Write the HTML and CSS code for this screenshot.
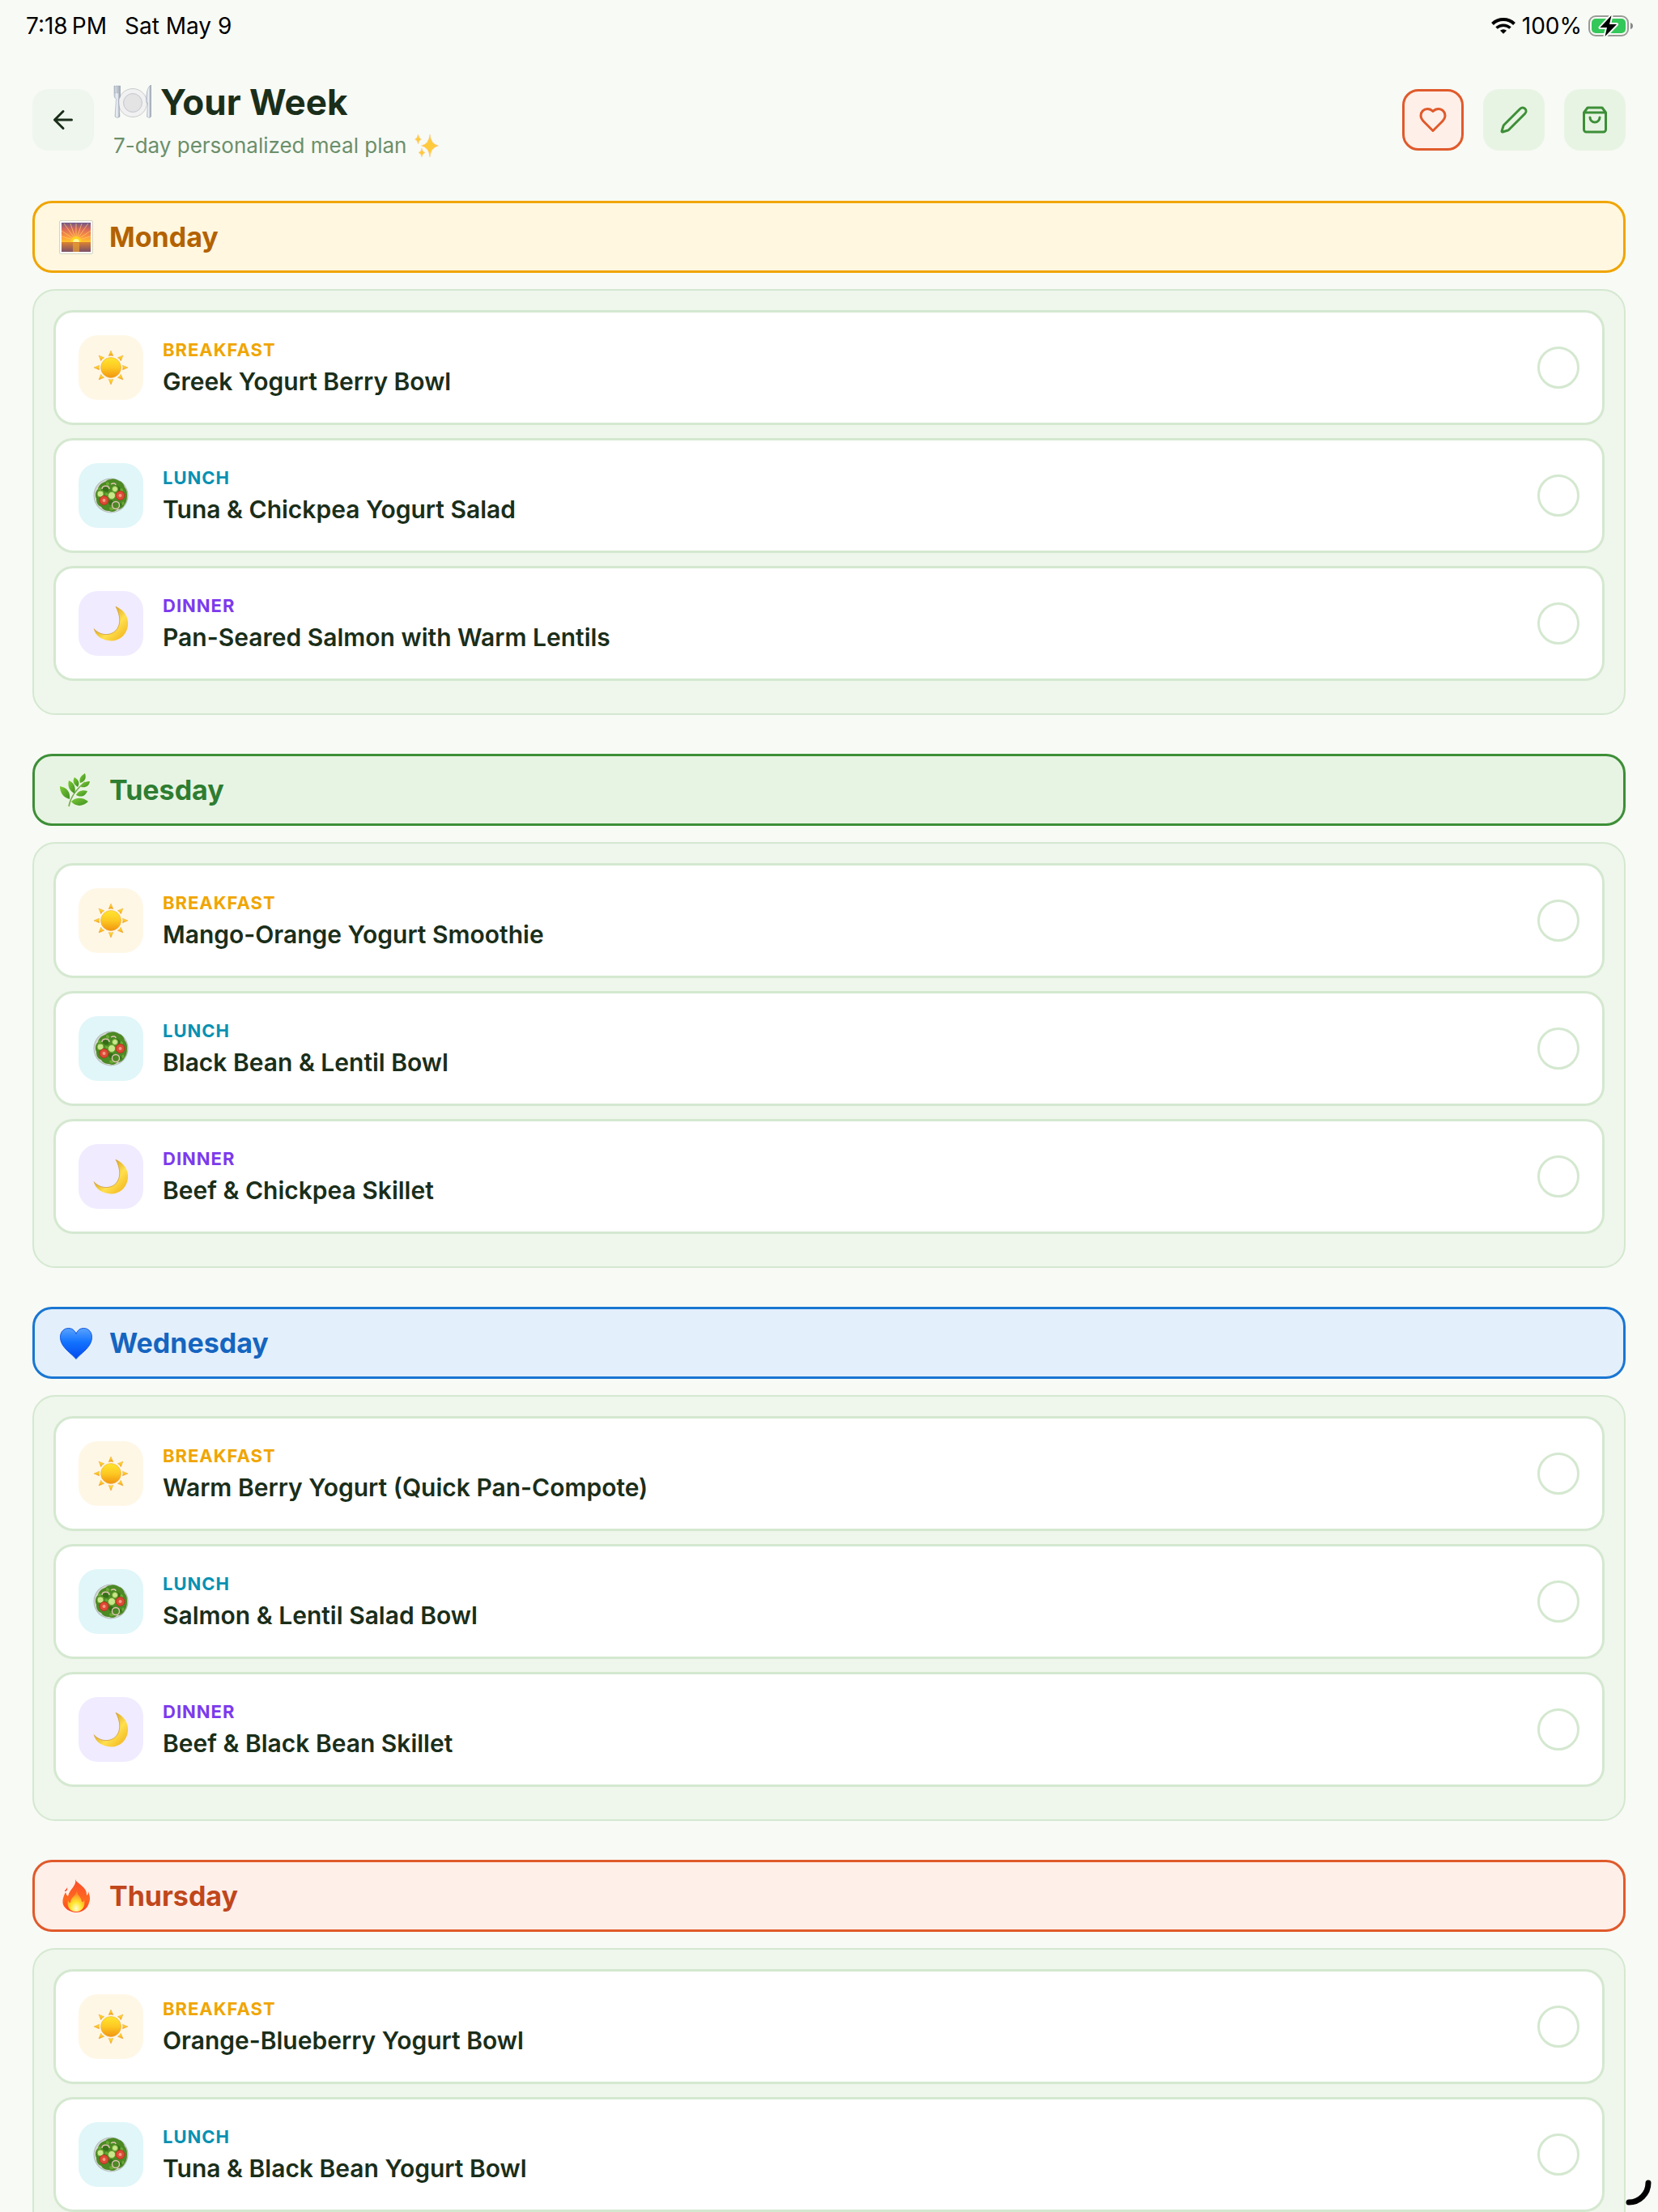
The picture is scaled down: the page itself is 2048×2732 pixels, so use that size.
FILE: index.html
```html
<!DOCTYPE html>
<html lang="en">
<head>
    <meta charset="UTF-8">
    <meta name="viewport" content="width=device-width, initial-scale=1.0">
    <title>Your Week</title>
    <link rel="stylesheet" href="styles.css">
</head>
<body>
    <!-- shared icons -->
    <svg class="sprite" aria-hidden="true">
        <defs>
            <linearGradient id="sunFill" x1="0" y1="0" x2="0" y2="1">
                <stop offset="0" stop-color="#ffe52e"/>
                <stop offset="0.5" stop-color="#fdc823"/>
                <stop offset="1" stop-color="#f1950f"/>
            </linearGradient>
            <linearGradient id="moonFill" x1="0" y1="0" x2="1" y2="1">
                <stop offset="0.3" stop-color="#d9a21b"/>
                <stop offset="0.6" stop-color="#ffe04f"/>
                <stop offset="0.9" stop-color="#f3b922"/>
            </linearGradient>
            <linearGradient id="skyFill" x1="0" y1="0" x2="0" y2="1">
                <stop offset="0" stop-color="#6d5a8c"/>
                <stop offset="0.22" stop-color="#d9695a"/>
                <stop offset="0.5" stop-color="#ff9a3c"/>
                <stop offset="0.66" stop-color="#ffc42c"/>
                <stop offset="0.68" stop-color="#d98032"/>
                <stop offset="1" stop-color="#7b5068"/>
            </linearGradient>
            <linearGradient id="leafFill" x1="0" y1="0" x2="1" y2="1">
                <stop offset="0" stop-color="#7ccb36"/>
                <stop offset="1" stop-color="#3f8f22"/>
            </linearGradient>
            <linearGradient id="heartFill" x1="0" y1="0" x2="0" y2="1">
                <stop offset="0" stop-color="#5aa2ff"/>
                <stop offset="0.45" stop-color="#1273ff"/>
                <stop offset="1" stop-color="#0448ee"/>
            </linearGradient>
            <linearGradient id="fireFill" x1="0" y1="0" x2="0" y2="1">
                <stop offset="0" stop-color="#fb4a2c"/>
                <stop offset="0.6" stop-color="#ff6a1f"/>
                <stop offset="1" stop-color="#ff3d22"/>
            </linearGradient>
            <radialGradient id="fireCore" cx="0.5" cy="0.85" r="0.7">
                <stop offset="0" stop-color="#fffbd0"/>
                <stop offset="0.45" stop-color="#ffe62e"/>
                <stop offset="1" stop-color="#ff8a2a"/>
            </radialGradient>
            <linearGradient id="steel" x1="0" y1="0" x2="1" y2="0">
                <stop offset="0" stop-color="#c3cdd9"/>
                <stop offset="0.5" stop-color="#eef2f7"/>
                <stop offset="1" stop-color="#8b95a3"/>
            </linearGradient>
        </defs>
        <symbol id="sun" viewBox="0 0 44 44">
            <g fill="url(#sunFill)" stroke="#e8a33a" stroke-width="0.5">
                <path d="M22 1l2.8 6.6q-2.8-1-5.6 0z"/>
                <path d="M22 43l2.8-6.6q-2.8 1-5.6 0z"/>
                <path d="M1 22l6.6-2.8q-1 2.8 0 5.6z"/>
                <path d="M43 22l-6.6-2.8q1 2.8 0 5.6z"/>
                <path d="M7 7l6.7 2.7q-2.7 1.2-4 4z"/>
                <path d="M37 7l-6.7 2.7q2.7 1.2 4 4z"/>
                <path d="M7 37l6.7-2.7q-2.7-1.2-4-4z"/>
                <path d="M37 37l-6.7-2.7q2.7-1.2 4-4z"/>
                <circle cx="22" cy="22" r="12.5"/>
            </g>
        </symbol>
        <symbol id="salad" viewBox="0 0 44 44">
            <circle cx="22" cy="22" r="21.5" fill="#b4bab9"/>
            <circle cx="22" cy="22" r="20.5" fill="#d3d8d5"/>
            <path d="M22 2c4-1 7 0 10 2 4 1 6 4 7 8 3 3 3 7 3 10 0 5-1 8-3 11-2 4-5 6-9 6-3 3-7 4-10 2-4 0-8-1-10-5-5-2-6-6-6-10-2-5-1-9 2-12 1-5 5-8 9-9 2-2 4-3 7-3z" fill="#4c8a24"/>
            <g fill="#357018">
                <path d="M12 12c4-3 8 0 7 5-5 1-8-1-7-5z"/>
                <path d="M28 10c5 0 7 4 5 7-5 0-7-3-5-7z"/>
                <path d="M19 28c5-1 8 2 6 6-4 1-7-2-6-6z"/>
                <path d="M8 24c3 0 4 2 3 5-3 0-4-2-3-5zM33 32c2-1 3 0 2 3-2 1-3-1-2-3z"/>
            </g>
            <g fill="#6aa935">
                <path d="M17 5c3 0 4 3 2 5-3 0-4-3-2-5zM34 13c3 0 4 3 2 5-3 0-3-3-2-5z"/>
                <path d="M20 37c3-2 6 0 5 3-3 1-5 0-5-3zM6 13c2-2 4-1 4 2-2 1-4 1-4-2z"/>
                <path d="M15 19c3-1 4 1 3 3-3 0-4-1-3-3zM36 30c3-1 3 2 1 4-2 0-2-2-1-4z"/>
            </g>
            <g fill="none" stroke="#e2c3b4" stroke-width="1.5">
                <path d="M11 14c0-5 9-5 9 0M22 8c3-2 6-1 6 1"/>
                <circle cx="28" cy="34" r="4.5"/>
            </g>
            <g fill="#c9e68a" stroke="#6ea834">
                <circle cx="9" cy="20" r="4"/>
                <circle cx="23" cy="22" r="4.5"/>
                <circle cx="27" cy="14" r="3.5"/>
            </g>
            <g fill="#dc4a35" stroke="#b8321f">
                <circle cx="13.5" cy="28" r="5.5"/>
                <circle cx="33.5" cy="22" r="5.5"/>
            </g>
            <g fill="#f39c84">
                <circle cx="13.5" cy="28" r="2"/>
                <circle cx="33.5" cy="22" r="2"/>
            </g>
        </symbol>
        <symbol id="moon" viewBox="0 0 44 44">
            <path d="M28 1C38 5 44 14 43 24 42 36 32 44 22 43.5 12 43 3 38 .8 28.5 6 34 12 36 18 35.5 31 34 38 20 28 1z" fill="url(#moonFill)"/>
            <path d="M28 1C38 20 31 34 18 35.5 12 36 6 34 .8 28.5" fill="none" stroke="#c8922e" stroke-width="0.7"/>
        </symbol>
        <symbol id="sunrise" viewBox="0 0 42 42">
            <rect x="0.5" y="0.5" width="41" height="41" rx="1.5" fill="#fbfbf8" stroke="#d5d6c4"/>
            <rect x="3" y="3" width="36" height="36" fill="url(#skyFill)"/>
            <path d="M21 25L6 4M21 25L14 4M21 25V4M21 25L28 4M21 25L36 4M21 25L3 13M21 25L39 13M21 25L3 20M21 25L39 20" stroke="#ffcf6b" opacity="0.7"/>
            <path d="M14 27a7 7 0 0 1 14 0z" fill="#ffd21f"/>
            <path d="M17 27a4 4 0 0 1 8 0z" fill="#fff799"/>
            <path d="M17 28h8v11h-8z" fill="#e9a030" opacity="0.7"/>
        </symbol>
        <symbol id="herb" viewBox="0 0 42 42">
            <path d="M12 41C14 29 22 19 32 11" fill="none" stroke="#7cab4e" stroke-width="1.6"/>
            <g fill="url(#leafFill)">
                <path d="M32 0c2 6 0 10-6 12-2-5 1-9 6-12z"/>
                <path d="M38 10c-1 6-5 8-11 7 1-5 5-7 11-7z"/>
                <path d="M19 5c5 3 7 7 4 12-5-3-7-7-4-12z"/>
                <path d="M12 9c7 3 9 9 7 16-6-3-9-9-7-16z"/>
                <path d="M35 22c-3 7-8 8-14 5 2-5 8-7 14-5z"/>
                <path d="M1 16c9 2 13 7 12 16C5 30 1 24 1 16z"/>
                <path d="M36 35c-6 6-15 7-21 0 6-6 15-5 21 0z"/>
            </g>
        </symbol>
        <symbol id="blueheart" viewBox="0 0 42 42">
            <path d="M21 40.5C15 33 1.5 26 1.5 13.5 1.5 7 6 2.5 11.5 2.5c4.5 0 8 2.5 9.5 7 1.5-4.5 5-7 9.5-7 5.5 0 10 4.5 10 11C40.5 26 27 33 21 40.5z" fill="url(#heartFill)" stroke="#1257dd"/>
        </symbol>
        <symbol id="fire" viewBox="0 0 42 42">
            <path d="M20 0c2 6 15 9 14 20 2-1 2-3 2-5 2 6 3 9 1 14-2 8-9 12-16 12S5 36 4.5 29C4 24 6 20 8 16c1 2 1 4 3 5 2-9 11-13 9-21z" fill="url(#fireFill)"/>
            <path d="M7 15c0-2 2-2 3-5 1 3-1 5-3 5z" fill="#fb4a2c"/>
            <path d="M22 14c0 6 6 8 6 14 2 0 3-2 3-3 2 8-2 15-10 15S9 33 11 26c1 1 1 3 3 3 0-7 7-8 8-15z" fill="url(#fireCore)"/>
        </symbol>
    </svg>

    <div class="status-bar">
        <div class="status-left">
            <span>7:18&thinsp;PM</span>
            <span>Sat May 9</span>
        </div>
        <div class="status-right">
            <svg class="wifi" viewBox="0 0 30 20" fill="none" stroke="#000" stroke-width="4">
                <path d="M1.5 7.5A19.5 19.5 0 0 1 28.5 7.5"/>
                <path d="M6.5 12.5A12.5 12.5 0 0 1 23.5 12.5" stroke-width="3.5"/>
                <path d="M15 19.8l-4-4a6 6 0 0 1 8 0z" fill="#000" stroke="none"/>
            </svg>
            <span>100%</span>
            <svg class="battery" viewBox="0 0 56 28">
                <rect x="1" y="2" width="48" height="24" rx="8" fill="none" stroke="#999c96" stroke-width="2"/>
                <rect x="4" y="5" width="42" height="18" rx="5" fill="#34c759"/>
                <path d="M52 10v8q3-1 3-4t-3-4z" fill="#888"/>
                <path d="M28.5 1L14.5 16h8.5l-2.5 11L35 12h-9z" fill="#000" stroke="#f8faf5" stroke-width="4" stroke-linejoin="round" paint-order="stroke"/>
            </svg>
        </div>
    </div>

    <header class="top">
        <button class="icon-btn back" aria-label="Back">
            <svg class="icon" viewBox="0 0 24 24"><path d="m12 19-7-7 7-7M19 12H5"/></svg>
        </button>
        <div class="titles">
            <h1>
                <svg class="plate" viewBox="0 0 48 42" aria-hidden="true">
                    <circle cx="24" cy="22" r="17.5" fill="#f1f1f2" stroke="#c9cacd"/>
                    <circle cx="24" cy="22" r="11.5" fill="#e2e2e3" stroke="#c4c8cf"/>
                    <circle cx="24" cy="22" r="9.5" fill="#e4e4e4"/>
                    <path d="M1 1h1v9h1V1h1.5v9h1V1H7v9h.5V1h1v12q0 3-2 4l1.5 22q-3 3-6 0L3.5 17Q1 16 1 13z" fill="url(#steel)" stroke="#8f99a8" stroke-width="0.5"/>
                    <path d="M46.5 0v39q-2 3-5 0l1-17h-1.5C40 12 42 2 46.5 0z" fill="url(#steel)" stroke="#8f99a8" stroke-width="0.5"/>
                </svg>
                Your Week
            </h1>
            <p>
                7-day personalized meal plan
                <svg class="sparkles" viewBox="0 0 30 30" aria-hidden="true" fill="#ffcb3d" stroke="#f9c58a" stroke-width="0.5">
                    <path d="M19 1q1.200 12 10.500 14-9.300 2-10.500 14-1.200-12-10.500-14Q17.800 13 19 1z"/>
                    <path d="M4.500 1q.8 5 4 6-3.200 1-4 6-.8-5-4-6 3.200-1 4-6z"/>
                    <path d="M9 18q.7 4.500 4 5.500-3.300 1-4 5.500-.7-4.500-4-5.500 3.300-1 4-5.500z"/>
                </svg>
            </p>
        </div>
        <div class="actions">
            <button class="icon-btn fav" aria-label="Favorites">
                <svg class="icon" viewBox="0 0 24 24"><path d="M19 14c1.490-1.460 3-3.210 3-5.500A5.500 5.500 0 0 0 16.500 3c-1.760 0-3 .5-4.500 2-1.500-1.500-2.740-2-4.500-2A5.500 5.500 0 0 0 2 8.500c0 2.300 1.500 4.050 3 5.500l7 7Z"/></svg>
            </button>
            <button class="icon-btn" aria-label="Edit">
                <svg class="icon" viewBox="0 0 24 24"><path d="M21.174 6.812a1 1 0 0 0-3.986-3.987L3.842 16.174a2 2 0 0 0-.5.83l-1.321 4.352a.5.5 0 0 0 .623.622l4.353-1.320a2 2 0 0 0 .83-.497z"/></svg>
            </button>
            <button class="icon-btn" aria-label="Shopping list">
                <svg class="icon" viewBox="0 0 24 24"><path d="M6 2 3 6v14a2 2 0 0 0 2 2h14a2 2 0 0 0 2-2V6l-3-4ZM3 6h18M16 10a4 4 0 0 1-8 0"/></svg>
            </button>
        </div>
    </header>

    <main class="week">
        <section class="day monday">
            <h2><svg class="day-icon"><use href="#sunrise"/></svg>Monday</h2>
            <div class="meals">
                <div class="meal breakfast">
                    <span class="tag"><svg><use href="#sun"/></svg></span>
                    <div class="info">
                        <span class="type">BREAKFAST</span>
                        <label for="mon1">Greek Yogurt Berry Bowl</label>
                    </div>
                    <input type="checkbox" id="mon1">
                </div>
                <div class="meal lunch">
                    <span class="tag"><svg><use href="#salad"/></svg></span>
                    <div class="info">
                        <span class="type">LUNCH</span>
                        <label for="mon2">Tuna &amp; Chickpea Yogurt Salad</label>
                    </div>
                    <input type="checkbox" id="mon2">
                </div>
                <div class="meal dinner">
                    <span class="tag"><svg><use href="#moon"/></svg></span>
                    <div class="info">
                        <span class="type">DINNER</span>
                        <label for="mon3">Pan-Seared Salmon with Warm Lentils</label>
                    </div>
                    <input type="checkbox" id="mon3">
                </div>
            </div>
        </section>

        <section class="day tuesday">
            <h2><svg class="day-icon"><use href="#herb"/></svg>Tuesday</h2>
            <div class="meals">
                <div class="meal breakfast">
                    <span class="tag"><svg><use href="#sun"/></svg></span>
                    <div class="info">
                        <span class="type">BREAKFAST</span>
                        <label for="tue1">Mango-Orange Yogurt Smoothie</label>
                    </div>
                    <input type="checkbox" id="tue1">
                </div>
                <div class="meal lunch">
                    <span class="tag"><svg><use href="#salad"/></svg></span>
                    <div class="info">
                        <span class="type">LUNCH</span>
                        <label for="tue2">Black Bean &amp; Lentil Bowl</label>
                    </div>
                    <input type="checkbox" id="tue2">
                </div>
                <div class="meal dinner">
                    <span class="tag"><svg><use href="#moon"/></svg></span>
                    <div class="info">
                        <span class="type">DINNER</span>
                        <label for="tue3">Beef &amp; Chickpea Skillet</label>
                    </div>
                    <input type="checkbox" id="tue3">
                </div>
            </div>
        </section>

        <section class="day wednesday">
            <h2><svg class="day-icon"><use href="#blueheart"/></svg>Wednesday</h2>
            <div class="meals">
                <div class="meal breakfast">
                    <span class="tag"><svg><use href="#sun"/></svg></span>
                    <div class="info">
                        <span class="type">BREAKFAST</span>
                        <label for="wed1">Warm Berry Yogurt (Quick Pan-Compote)</label>
                    </div>
                    <input type="checkbox" id="wed1">
                </div>
                <div class="meal lunch">
                    <span class="tag"><svg><use href="#salad"/></svg></span>
                    <div class="info">
                        <span class="type">LUNCH</span>
                        <label for="wed2">Salmon &amp; Lentil Salad Bowl</label>
                    </div>
                    <input type="checkbox" id="wed2">
                </div>
                <div class="meal dinner">
                    <span class="tag"><svg><use href="#moon"/></svg></span>
                    <div class="info">
                        <span class="type">DINNER</span>
                        <label for="wed3">Beef &amp; Black Bean Skillet</label>
                    </div>
                    <input type="checkbox" id="wed3">
                </div>
            </div>
        </section>

        <section class="day thursday">
            <h2><svg class="day-icon"><use href="#fire"/></svg>Thursday</h2>
            <div class="meals">
                <div class="meal breakfast">
                    <span class="tag"><svg><use href="#sun"/></svg></span>
                    <div class="info">
                        <span class="type">BREAKFAST</span>
                        <label for="thu1">Orange-Blueberry Yogurt Bowl</label>
                    </div>
                    <input type="checkbox" id="thu1">
                </div>
                <div class="meal lunch">
                    <span class="tag"><svg><use href="#salad"/></svg></span>
                    <div class="info">
                        <span class="type">LUNCH</span>
                        <label for="thu2">Tuna &amp; Black Bean Yogurt Bowl</label>
                    </div>
                    <input type="checkbox" id="thu2">
                </div>
            </div>
        </section>
    </main>

    <!-- corner handle -->
    <svg class="corner" viewBox="0 0 32 32" aria-hidden="true">
        <path d="M28 4A24 24 0 0 1 4 28" fill="none" stroke="#000" stroke-width="7" stroke-linecap="round"/>
    </svg>
</body>
</html>
```

FILE: styles.css
```css
* {
    box-sizing: border-box;
}
body {
    margin: 0;
    height: 100vh;
    overflow: hidden;
    background-color: #f8faf5;
    color: #1a2e1a;
    font-family: Inter, "Liberation Sans", sans-serif;
}
h1, h2, p {
    margin: 0;
}
svg {
    display: block;
    flex-shrink: 0;
}
.sprite {
    position: absolute;
    width: 0;
    height: 0;
}

/* status bar */
.status-bar {
    display: flex;
    justify-content: space-between;
    align-items: center;
    height: 64px;
    padding: 0 30px 0 32px;
    color: #000;
    font-size: 28px;
    font-weight: 400;
}
.status-left {
    display: flex;
    gap: 22px;
}
.status-right {
    display: flex;
    align-items: center;
    gap: 8px;
}
.wifi {
    width: 30px;
    height: 20px;
}
.battery {
    width: 56px;
    height: 28px;
}

/* header */
.top {
    display: flex;
    align-items: center;
    gap: 24px;
    padding: 36px 40px 52px;
}
.titles {
    flex: 1;
}
h1 {
    display: flex;
    align-items: center;
    gap: 10px;
    font-size: 44px;
    line-height: 52px;
    font-weight: 700;
}
.plate {
    width: 48px;
    height: 42px;
}
.titles p {
    display: flex;
    align-items: center;
    gap: 10px;
    margin-top: 12px;
    color: #6b8f6b;
    font-size: 26px;
    line-height: 32px;
}
.sparkles {
    width: 30px;
    height: 30px;
}
.actions {
    display: flex;
    gap: 24px;
}
.icon-btn {
    display: flex;
    align-items: center;
    justify-content: center;
    width: 76px;
    height: 76px;
    padding: 0;
    border: none;
    border-radius: 20px;
    background-color: #e8f4e3;
    color: #3d8f38;
    cursor: pointer;
}
.back {
    background-color: #eff6ee;
    color: #1a2e1a;
}
.fav {
    border: 3px solid #e05a2b;
    background-color: #ffefe9;
    color: #e05a2b;
}
.icon {
    width: 36px;
    height: 36px;
    fill: none;
    stroke: currentColor;
    stroke-width: 2;
    stroke-linecap: round;
    stroke-linejoin: round;
}

/* days */
.week {
    display: flex;
    flex-direction: column;
    gap: 48px;
    padding: 0 40px;
}
.day h2 {
    display: flex;
    align-items: center;
    gap: 20px;
    margin-bottom: 20px;
    padding: 20px 30px;
    border: 3px solid;
    border-radius: 24px;
    font-size: 34px;
    line-height: 43px;
    font-weight: 700;
}
.day-icon {
    width: 42px;
    height: 42px;
}
.monday h2 {
    background-color: #fff7e0;
    border-color: #f0a500;
    color: #b36200;
}
.tuesday h2 {
    background-color: #e8f4e3;
    border-color: #3d8f38;
    color: #2e7d32;
}
.wednesday h2 {
    background-color: #e3effb;
    border-color: #1976d2;
    color: #1565c0;
}
.thursday h2 {
    background-color: #ffefe9;
    border-color: #e05a2b;
    color: #c0471c;
}

/* meals */
.meals {
    padding: 24px;
    border: 2px solid #d4e8d0;
    border-radius: 28px;
    background-color: #eff6ec;
}
.meal {
    display: flex;
    align-items: center;
    gap: 24px;
    margin-bottom: 16px;
    padding: 28px;
    border: 3px solid #d4e8d0;
    border-radius: 24px;
    background-color: #fff;
}
.tag {
    display: flex;
    align-items: center;
    justify-content: center;
    width: 80px;
    height: 80px;
    border-radius: 24px;
}
.tag svg {
    width: 44px;
    height: 44px;
}
.info {
    display: flex;
    flex: 1;
    flex-direction: column;
    gap: 6px;
}
.type {
    font-size: 22px;
    line-height: 28px;
    font-weight: 700;
    letter-spacing: 1px;
}
.info label {
    font-size: 30px;
    line-height: 38px;
    font-weight: 600;
}
.breakfast .tag {
    background-color: #fff7e6;
}
.breakfast .type {
    color: #f0a500;
}
.lunch .tag {
    background-color: #e0f6f9;
}
.lunch .type {
    color: #0891b2;
}
.dinner .tag {
    background-color: #f0ebff;
}
.dinner .type {
    color: #7c3aed;
}
.meal input {
    appearance: none;
    width: 52px;
    height: 52px;
    margin: 0;
    border: 3px solid #d4e8d0;
    border-radius: 50%;
    background-color: #fff;
}
.meal input:checked {
    background-color: #3d8f38;
}

.corner {
    position: fixed;
    right: 8px;
    bottom: 8px;
    width: 32px;
    height: 32px;
}
```
